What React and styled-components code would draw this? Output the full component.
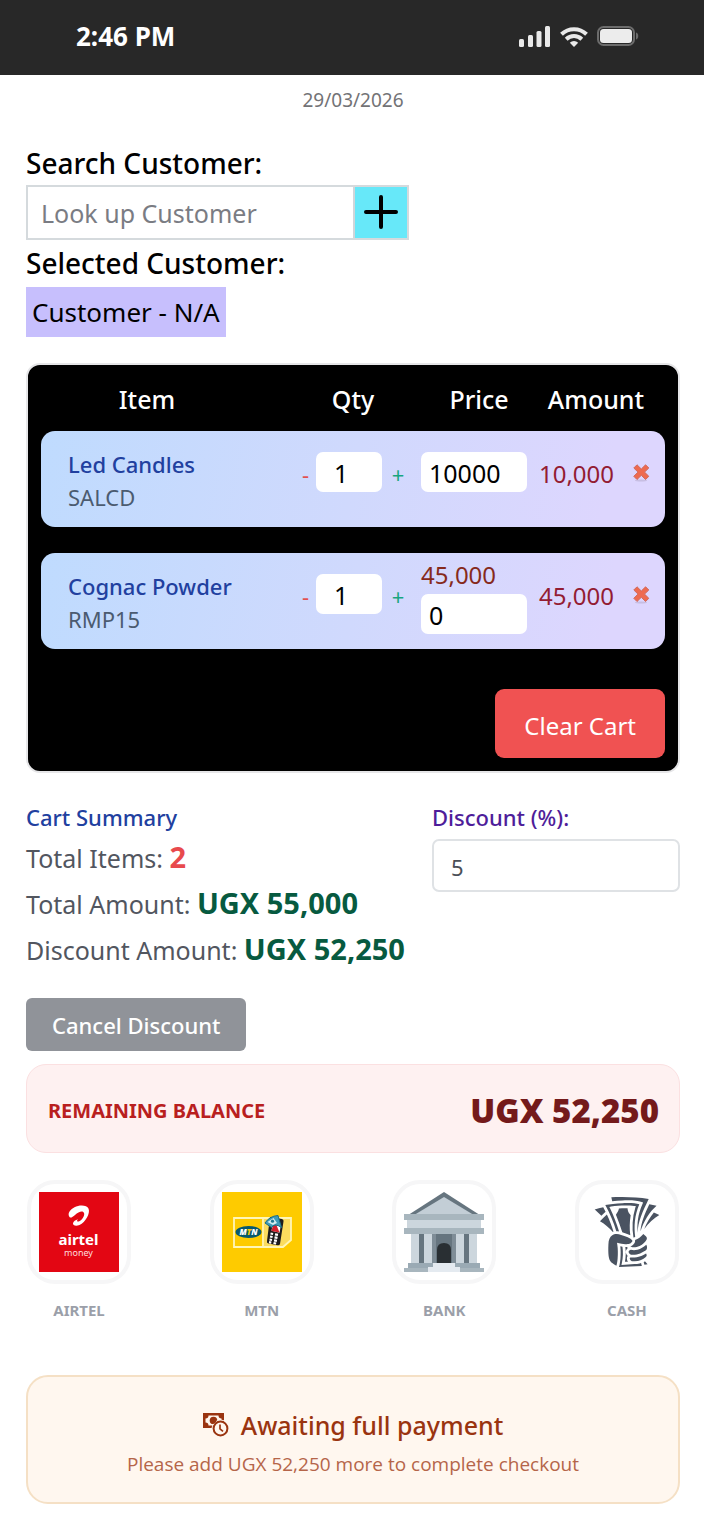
import styled, { createGlobalStyle } from "styled-components";
import { GiTakeMyMoney } from "react-icons/gi";

const GlobalStyle = createGlobalStyle`
  * {
    box-sizing: border-box;
  }
  body {
    margin: 0;
    background-color: #fff;
    font-family: "Noto Sans", "Open Sans", sans-serif;
    color: #000;
  }
  button,
  input {
    font-family: inherit;
  }
  h2,
  h3,
  p {
    margin: 0;
  }
`;

const StatusBar = styled.header`
  height: 75px;
  padding: 0 65px 3px 76px;
  display: flex;
  align-items: center;
  justify-content: space-between;
  background-color: #282828;
  color: #fff;
`;
const Time = styled.span`
  font-size: 26px;
  font-weight: 700;
`;
const StatusIcons = styled.div`
  display: flex;
  align-items: center;
  gap: 9px;
`;
const Page = styled.main`
  padding: 10px 24px 20px 26px;
`;
const DateText = styled.p`
  font-size: 19px;
  line-height: 30px;
  text-align: center;
  color: #737376;
`;

/* customer */
const CustomerSection = styled.section`
  margin-top: 27px;
  display: flex;
  flex-direction: column;
  align-items: flex-start;
`;
const CustomerLabel = styled.label`
  padding-bottom: 1px;
  font-size: 28px;
  font-weight: 500;
  line-height: 42px;
`;
const CustomerHeading = styled.h2`
  font-size: 28px;
  font-weight: 500;
  line-height: 47px;
`;
const SearchRow = styled.div`
  display: flex;
  width: 383px;
  max-width: 100%;
  height: 55px;
  border: 2px solid #d5dadd;
`;
const SearchInput = styled.input`
  flex: 1;
  min-width: 0;
  border: none;
  border-right: 2px solid #d0d6da;
  outline: none;
  padding: 0 13px;
  font-size: 25px;
  &::placeholder {
    color: #7a7c83;
    opacity: 1;
  }
`;
const AddButton = styled.button`
  width: 52px;
  padding: 0 0 2px;
  border: none;
  display: flex;
  align-items: center;
  justify-content: center;
  background-color: #67e8f9;
`;
const CustomerChip = styled.p`
  padding: 2px 6px 1px;
  font-size: 26px;
  line-height: 47px;
  background-color: #c7bffd;
`;

/* cart */
const Cart = styled.section`
  margin-top: 26px;
  padding: 13px;
  border: 2px solid #e6e6e8;
  border-radius: 14px;
  background-color: #000;
`;
const CartTable = styled.table`
  display: block;
`;
const CartHead = styled.thead`
  display: block;
`;
const CartBody = styled.tbody`
  display: grid;
  gap: 26px;
`;
const HeadRow = styled.tr`
  display: grid;
  grid-template-columns: minmax(0, 1fr) 126px 106px 138px;
  height: 53px;
`;
const HeadCell = styled.th`
  padding: ${(p) => p.$pad || "0"};
  color: #fff;
  font-size: 25px;
  font-weight: 500;
  line-height: 42px;
  text-align: center;
`;
const ItemRow = styled.tr`
  display: grid;
  grid-template-columns: minmax(0, 1fr) 126px 106px 87px 51px;
  align-items: center;
  padding-bottom: 14px;
  border-radius: 14px;
  background: linear-gradient(100deg, #bfdbfe, #d0d9fd 50%, #ddd6fe 90%);
`;
const ItemCell = styled.td`
  padding: 17px 0 0 27px;
`;
const Cell = styled.td`
  padding: 0;
`;
const ItemName = styled.p`
  font-size: 22px;
  font-weight: 500;
  line-height: 33px;
  color: #21409f;
`;
const ItemCode = styled.p`
  font-size: 22px;
  line-height: 32px;
  color: #4b5b70;
`;
const QtyBox = styled.div`
  display: flex;
  align-items: center;
`;
const StepButton = styled.button`
  width: ${(p) => (p.$plus ? 32 : 21)}px;
  padding: 3px 0 0;
  border: none;
  background: none;
  font-size: 22px;
  text-align: center;
  color: ${(p) => (p.$plus ? "#17a67f" : "#e2504f")};
`;
const NumberInput = styled.input`
  display: block;
  width: ${(p) => (p.$qty ? 66 : 106)}px;
  height: 40px;
  padding: 2px ${(p) => (p.$qty ? 18 : 8)}px 0;
  border: none;
  border-radius: 7px;
  outline: none;
  background-color: #fff;
  font-size: 25px;
  color: #000;
`;
const BasePrice = styled.span`
  display: block;
  font-size: 24px;
  line-height: 42px;
  margin-bottom: -2px;
  color: #862a1c;
`;
const AmountCell = styled.td`
  padding: 3px 0 0;
  font-size: 24px;
  text-align: right;
  color: #931c33;
`;
const RemoveButton = styled.button`
  display: block;
  margin-left: 19px;
  padding: 2px 0 0;
  border: none;
  background: none;
  line-height: 0;
`;
const ClearRow = styled.div`
  display: flex;
  justify-content: flex-end;
  margin-top: 40px;
`;
const ClearButton = styled.button`
  height: 69px;
  padding: 3px 29px 0;
  border: none;
  border-radius: 9px;
  background-color: #f05252;
  color: #fff;
  font-size: 24px;
`;

/* summary */
const Summary = styled.section`
  margin-top: 27px;
  display: grid;
  grid-template-columns: minmax(0, 1fr) 248px;
  align-items: start;
`;
const SummaryTitle = styled.h3`
  font-size: 22px;
  font-weight: 500;
  line-height: 34px;
  color: #21409f;
`;
const SummaryLines = styled.div`
  padding-top: 1px;
`;
const SummaryLine = styled.p`
  font-size: 25px;
  line-height: 46px;
  color: #52565f;
`;
const Strong = styled.strong`
  font-size: 29px;
  line-height: 1;
  color: ${(p) => p.$color || "#075a40"};
`;
const DiscountLabel = styled.label`
  display: block;
  font-size: 22px;
  font-weight: 500;
  line-height: 34px;
  color: #4e1d9a;
`;
const DiscountInput = styled.input`
  display: block;
  width: 100%;
  height: 53px;
  margin-top: 5px;
  padding: 2px 17px 0;
  border: 2px solid #dfe2e5;
  border-radius: 7px;
  outline: none;
  font-size: 22px;
  color: #4b4f57;
`;
const CancelButton = styled.button`
  height: 53px;
  margin-top: 25px;
  padding: 1px 26px 0;
  border: none;
  border-radius: 6px;
  background-color: #909399;
  color: #fff;
  font-size: 22px;
  font-weight: 500;
`;
const Balance = styled.section`
  margin-top: 13px;
  height: 89px;
  padding: 3px 20px 0 21px;
  display: flex;
  align-items: center;
  justify-content: space-between;
  border: 1px solid #fbe0e1;
  border-radius: 20px;
  background-color: #fef1f1;
`;
const BalanceLabel = styled.span`
  font-size: 20px;
  font-weight: 700;
  color: #b91f1f;
`;
const BalanceValue = styled.span`
  font-family: "Open Sans", "Noto Sans", sans-serif;
  font-size: 33px;
  font-weight: 800;
  color: #741a1b;
`;

/* payment methods */
const Methods = styled.section`
  margin-top: 27px;
  padding: 0 1px;
  display: flex;
  justify-content: space-between;
`;
const Method = styled.button`
  padding: 0;
  border: none;
  background: none;
  display: flex;
  flex-direction: column;
  align-items: center;
  gap: 13px;
  font-size: 15px;
  font-weight: 700;
  line-height: 26px;
  color: #9b9fa9;
`;
const Tile = styled.span`
  width: 104px;
  height: 104px;
  display: flex;
  align-items: center;
  justify-content: center;
  border: 4px solid #f6f6f7;
  border-radius: 28px;
  background-color: #fff;
  color: #4a5361;
`;
const Notice = styled.section`
  margin-top: 52px;
  height: 129px;
  padding-top: 6px;
  display: flex;
  flex-direction: column;
  align-items: center;
  justify-content: center;
  border: 2px solid #f5e0c5;
  border-radius: 22px;
  background-color: #fff7ef;
`;
const NoticeTitle = styled.h3`
  display: flex;
  align-items: center;
  gap: 12px;
  font-size: 25px;
  font-weight: 500;
  line-height: 42px;
  color: #9a3410;
`;
const NoticeText = styled.p`
  font-family: "Open Sans", "Noto Sans", sans-serif;
  font-size: 19px;
  line-height: 36px;
  color: #b56549;
`;

const SignalIcon = () => (
  <svg width="32" height="21" viewBox="0 0 32 21" fill="#e9e9e9">
    <rect x="0" y="13" width="5" height="8" rx="1.5" />
    <rect x="9" y="9" width="5" height="12" rx="1.5" />
    <rect x="17.5" y="5" width="5" height="16" rx="1.5" />
    <rect x="26" y="0" width="5" height="21" rx="1.5" />
  </svg>
);

const WifiIcon = () => (
  <svg width="28" height="21" viewBox="0 0 28 21" fill="none" stroke="#e9e9e9" strokeWidth="4">
    <path d="M1.5 8.2a18 18 0 0 1 25 0" />
    <path d="M6.2 13.2a11.300 11.300 0 0 1 15.600 0" />
    <path d="M9.800 16.700a6.300 6.300 0 0 1 8.400 0L14 21z" fill="#e9e9e9" stroke="none" />
  </svg>
);

const BatteryIcon = () => (
  <svg width="42" height="20" viewBox="0 0 42 20">
    <rect x="1" y="1" width="36" height="18" rx="5.5" fill="none" stroke="#6c6c6c" strokeWidth="2" />
    <rect x="3" y="3" width="32" height="14" rx="3.5" fill="#ececec" />
    <path d="M39 6.5c3 .8 3 6.2 0 7z" fill="#6c6c6c" />
  </svg>
);

const PlusIcon = () => (
  <svg width="34" height="34" viewBox="0 0 34 34" stroke="#000" strokeWidth="4" strokeLinecap="round">
    <path d="M17 2v30M2 17h30" />
  </svg>
);

const RemoveIcon = () => (
  <svg width="17" height="18" viewBox="0 0 17 18">
    <ellipse cx="8" cy="16.5" rx="6" ry="1" fill="#b9aecf" opacity=".6" />
    <path
      d="M4 .8 8.300 5 12.600.8 15.800 4 11.500 8.100l4.300 4.200-3.200 3.200-4.300-4.200L4 15.500.8 12.300 5 8.100.8 4z"
      fill="#ee6a50"
      stroke="#cf6a5c"
      strokeWidth="1"
      strokeLinejoin="round"
    />
  </svg>
);

const AirtelLogo = () => (
  <svg width="80" height="80" viewBox="0 0 80 80">
    <rect width="80" height="80" fill="#e30613" />
    <path
      d="M30.500 25C28 21.500 31 17.500 35.500 15.200c5-2.500 12.500-2.400 14.100 1.600 1.800 4.600-3 13.500-9.100 16.200-3.500 1.400-6.800.6-6.500-1.700.3-2 2.500-3.300 5-4-1.700 1.700-1.100 2.700.7 2.100 3-1 6.200-5.500 5.400-8.200-1-3-5.500-1.500-9.100 1.700-2.300 2-4.300 3.500-5.500 2.100z"
      fill="#fff"
    />
    <text x="39.5" y="53" textAnchor="middle" fontFamily="Noto Sans, sans-serif" fontWeight="700" fontSize="15" fill="#fff">
      airtel
    </text>
    <text x="39.5" y="64" textAnchor="middle" fontFamily="Noto Sans, sans-serif" fontWeight="400" fontSize="9" fill="#ffdcdc">
      money
    </text>
  </svg>
);

const MtnLogo = () => (
  <svg width="80" height="80" viewBox="0 0 80 80">
    <rect width="80" height="80" fill="#fecb00" />
    <path d="M42 26h27v22l-8 7H42z" fill="#fbdc5e" />
    <path d="M12 26h57v22l-8 7H12zM41 26v29" fill="none" stroke="#fff6b8" strokeWidth="1.8" />
    <ellipse cx="26.500" cy="40" rx="13" ry="6" fill="#07596e" />
    <text x="26.5" y="43" textAnchor="middle" fontFamily="Open Sans, sans-serif" fontStyle="italic" fontWeight="800" fontSize="8" fill="#fff">
      M<tspan fill="#fecb00">T</tspan>N
    </text>
    <path d="m48 25 12 2q2 .5 1.500 2.500L58 52q-.6 1.600-2.500 1.200l-9-1.700q-2-.5-1.500-2.500z" fill="#1d1b1c" />
    <path d="m51 31 8 1.300-1.500 8.500-8-2z" fill="#fff" />
    <path d="m51 33 3-1 3.500 8.500-8-1.500z" fill="#d3202e" />
    <path
      d="m48.500 41.500 2.600.5M53 42.300l3 .6M48 44.500l2.600.5M52.500 45.300l3 .6M47.500 47.500l2.500.5M52 48.400l2.900.5M47 50.200l2.300.4M51.500 51l2.700.5"
      stroke="#fff"
      strokeWidth="2.2"
    />
    <path d="M43 31q4.500-7 13-7.500l3.500 12q-7-5-10 0z" fill="#3e9bb7" stroke="#176c86" strokeWidth="1" />
    <path d="m45.500 30 6-4 3.500 5-4 2z" fill="#d4eef0" />
    <circle cx="50.5" cy="29.2" r="1.6" fill="#1f7892" />
  </svg>
);

const BankLogo = () => (
  <svg width="80" height="80" viewBox="0 0 80 80">
    <path d="M5 22.500 40 0l35 22.500z" fill="#66757f" />
    <path d="M11 22.500 40 5l29 17.500z" fill="#c3ced6" />
    <path d="M3 27h74v12H3z" fill="#ccd6dd" />
    <path d="M7 42h66v31H7z" fill="#ccd6dd" />
    <path d="M0 22h80v6H0zM0 36h80v6H0z" fill="#a8b6be" />
    <path d="M15 42h5v29h-5zM60 42h5v29h-5z" fill="#66757f" />
    <path d="M28 42h24v29H28z" fill="#66757f" />
    <path d="M28 42h4v29h-4zM48 42h4v29h-4z" fill="#7f8d97" />
    <path d="M33 71V58q0-7 7-7t7 7v13z" fill="#292f33" />
    <path d="M4 71h25v5H4zM51 71h25v5H51z" fill="#9aaab4" />
    <path d="M0 76h24v4H0zM56 76h24v4H56z" fill="#a8b6be" />
    <path d="M29 71h22v4h5v5H24v-5h5z" fill="#e4eaf0" />
  </svg>
);

const MoneyClockIcon = () => (
  <svg width="26" height="24" viewBox="0 0 26 24">
    <path d="M0 0h21v15H0z" fill="#9a3410" />
    <path d="M5.500 2.500h10a3 3 0 0 0 3 3v7h-13a3 3 0 0 0-3-3v-4a3 3 0 0 0 3-3z" fill="#fff7ef" />
    <circle cx="10.5" cy="7.500" r="3.800" fill="#9a3410" />
    <circle cx="17.5" cy="15.5" r="9" fill="#fff7ef" />
    <circle cx="17.5" cy="15.5" r="6.900" fill="none" stroke="#9a3410" strokeWidth="2" />
    <path d="M13.500 7a3.800 3.800 0 0 1-5 3.800l2-3.300z" fill="#9a3410" />
    <path d="M17 11.500v4.300l3 2.500" fill="none" stroke="#9a3410" strokeWidth="1.7" />
  </svg>
);

const items = [
  { name: "Led Candles", code: "SALCD", qty: 1, price: "10000", amount: "10,000" },
  { name: "Cognac Powder", code: "RMP15", qty: 1, base: "45,000", price: "0", amount: "45,000" },
];

const methods = [
  { label: "AIRTEL", icon: <AirtelLogo /> },
  { label: "MTN", icon: <MtnLogo /> },
  { label: "BANK", icon: <BankLogo /> },
  { label: "CASH", icon: <GiTakeMyMoney size={80} /> },
];

const App = () => {
  return (
    <>
      <GlobalStyle />
      <StatusBar>
        <Time>2:46 PM</Time>
        <StatusIcons>
          <SignalIcon />
          <WifiIcon />
          <BatteryIcon />
        </StatusIcons>
      </StatusBar>
      <Page>
        <DateText>29/03/2026</DateText>
        <CustomerSection>
          <CustomerLabel htmlFor="customer">Search Customer:</CustomerLabel>
          <SearchRow>
            <SearchInput id="customer" type="text" placeholder="Look up Customer" />
            <AddButton type="button" aria-label="Add customer">
              <PlusIcon />
            </AddButton>
          </SearchRow>
          <CustomerHeading>Selected Customer:</CustomerHeading>
          <CustomerChip>Customer - N/A</CustomerChip>
        </CustomerSection>

        <Cart>
          <CartTable>
            <CartHead>
              <HeadRow>
                <HeadCell $pad="0 42px 0 0">Item</HeadCell>
                <HeadCell $pad="0 10px 0 0">Qty</HeadCell>
                <HeadCell $pad="0 0 0 10px">Price</HeadCell>
                <HeadCell colSpan="2">Amount</HeadCell>
              </HeadRow>
            </CartHead>
            <CartBody>
              {items.map((item) => (
                <ItemRow key={item.code}>
                  <ItemCell>
                    <ItemName>{item.name}</ItemName>
                    <ItemCode>{item.code}</ItemCode>
                  </ItemCell>
                  <Cell>
                    <QtyBox>
                      <StepButton type="button" aria-label="Decrease quantity">
                        -
                      </StepButton>
                      <NumberInput $qty aria-label="Quantity" inputMode="numeric" defaultValue={item.qty} />
                      <StepButton $plus type="button" aria-label="Increase quantity">
                        +
                      </StepButton>
                    </QtyBox>
                  </Cell>
                  <Cell>
                    {item.base && <BasePrice>{item.base}</BasePrice>}
                    <NumberInput aria-label="Price" inputMode="numeric" defaultValue={item.price} />
                  </Cell>
                  <AmountCell>{item.amount}</AmountCell>
                  <Cell>
                    <RemoveButton type="button" aria-label="Remove item">
                      <RemoveIcon />
                    </RemoveButton>
                  </Cell>
                </ItemRow>
              ))}
            </CartBody>
          </CartTable>
          <ClearRow>
            <ClearButton type="button">Clear Cart</ClearButton>
          </ClearRow>
        </Cart>

        <Summary>
          <div>
            <SummaryTitle>Cart Summary</SummaryTitle>
            <SummaryLines>
              <SummaryLine>
                Total Items: <Strong $color="#e84a4d">2</Strong>
              </SummaryLine>
              <SummaryLine>
                Total Amount: <Strong>UGX 55,000</Strong>
              </SummaryLine>
              <SummaryLine>
                Discount Amount: <Strong>UGX 52,250</Strong>
              </SummaryLine>
            </SummaryLines>
          </div>
          <div>
            <DiscountLabel htmlFor="discount">Discount (%):</DiscountLabel>
            <DiscountInput id="discount" inputMode="numeric" defaultValue="5" />
          </div>
        </Summary>
        <CancelButton type="button">Cancel Discount</CancelButton>

        <Balance>
          <BalanceLabel>REMAINING BALANCE</BalanceLabel>
          <BalanceValue>UGX 52,250</BalanceValue>
        </Balance>

        <Methods>
          {methods.map((method) => (
            <Method key={method.label} type="button">
              <Tile>{method.icon}</Tile>
              {method.label}
            </Method>
          ))}
        </Methods>

        <Notice>
          <NoticeTitle>
            <MoneyClockIcon />
            Awaiting full payment
          </NoticeTitle>
          <NoticeText>Please add UGX 52,250 more to complete checkout</NoticeText>
        </Notice>
      </Page>
    </>
  );
};

export default App;
